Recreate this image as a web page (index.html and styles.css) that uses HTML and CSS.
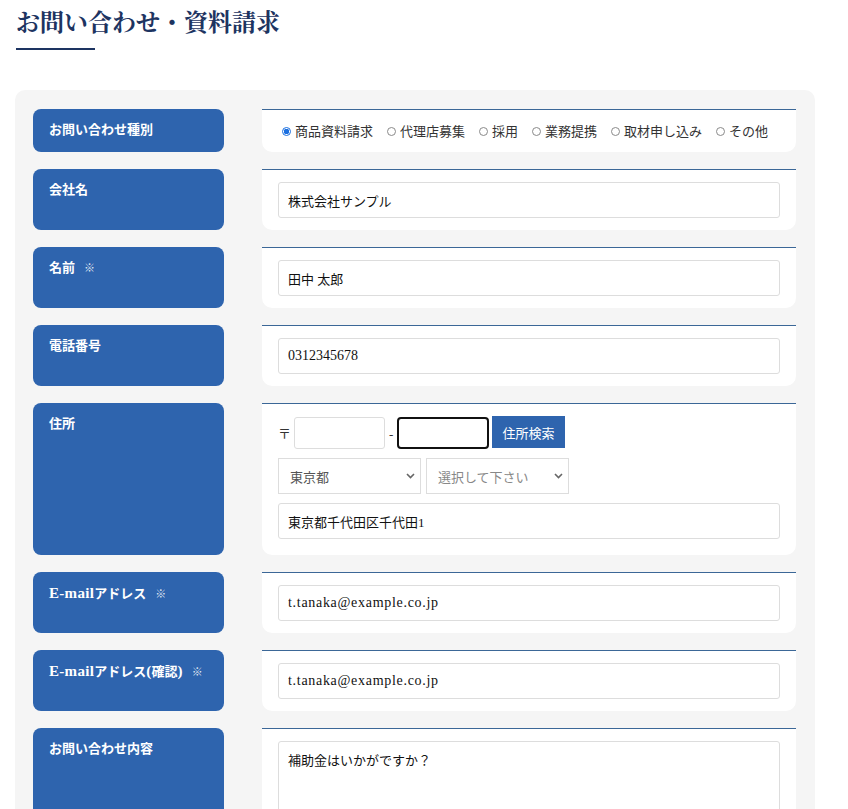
FILE: index.html
```html
<!DOCTYPE html>
<html lang="ja">
<head>
<meta charset="utf-8">
<title>お問い合わせ・資料請求</title>
<link rel="stylesheet" href="styles.css">
</head>
<body>
<div class="page">
  <h1 class="title">お問い合わせ・資料請求</h1>
  <div class="title-line"></div>

  <form class="form-box">
    <div class="label">お問い合わせ種別</div>
    <div class="panel panel-radio">
      <label class="radio"><input type="radio" name="kind" checked><span>商品資料請求</span></label>
      <label class="radio"><input type="radio" name="kind"><span>代理店募集</span></label>
      <label class="radio"><input type="radio" name="kind"><span>採用</span></label>
      <label class="radio"><input type="radio" name="kind"><span>業務提携</span></label>
      <label class="radio"><input type="radio" name="kind"><span>取材申し込み</span></label>
      <label class="radio"><input type="radio" name="kind"><span>その他</span></label>
    </div>

    <div class="label">会社名</div>
    <div class="panel"><input class="field" type="text" value="株式会社サンプル"></div>

    <div class="label">名前<span class="req">※</span></div>
    <div class="panel"><input class="field" type="text" value="田中 太郎"></div>

    <div class="label">電話番号</div>
    <div class="panel"><input class="field field-latin" type="text" value="0312345678"></div>

    <div class="label">住所</div>
    <div class="panel panel-address">
      <div class="zip-row">
        <span class="zip-mark">〒</span>
        <input class="zip zip1" type="text">
        <span class="zip-dash">-</span>
        <input class="zip zip2" type="text">
        <button class="zip-btn" type="button">住所検索</button>
      </div>
      <div class="select-row">
        <span class="select-wrap">
          <select class="sel sel-pref"><option>東京都</option></select>
          <svg class="chev" width="9" height="6" viewBox="0 0 9 6"><path d="M1 1 L4.5 4.5 L8 1" fill="none" stroke="#666" stroke-width="1.6"/></svg>
        </span>
        <span class="select-wrap">
          <select class="sel sel-city"><option>選択して下さい</option></select>
          <svg class="chev" width="9" height="6" viewBox="0 0 9 6"><path d="M1 1 L4.5 4.5 L8 1" fill="none" stroke="#666" stroke-width="1.6"/></svg>
        </span>
      </div>
      <input class="field" type="text" value="東京都千代田区千代田1">
    </div>

    <div class="label"><span class="lat">E-mail</span>アドレス<span class="req">※</span></div>
    <div class="panel"><input class="field field-latin field-mail" type="text" value="t.tanaka@example.co.jp"></div>

    <div class="label"><span class="lat">E-mail</span>アドレス<span class="lat">(</span>確認<span class="lat">)</span><span class="req">※</span></div>
    <div class="panel"><input class="field field-latin field-mail" type="text" value="t.tanaka@example.co.jp"></div>

    <div class="label label-tall">お問い合わせ内容</div>
    <div class="panel"><textarea class="area">補助金はいかがですか？</textarea></div>
  </form>
</div>
</body>
</html>
```

FILE: styles.css
```css
* { box-sizing: border-box; }

html, body {
  margin: 0;
  padding: 0;
  background: #ffffff;
}

body {
  font-family: "Liberation Serif", "Noto Sans CJK JP", serif;
  color: #222;
}

.page {
  padding: 0 15px 40px;
}

.title {
  margin: 0;
  padding: 5px 0 0 1px;
  font-family: "Noto Serif CJK JP", "Liberation Serif", "Noto Sans CJK JP", serif;
  font-size: 24px;
  line-height: 32px;
  font-weight: 700;
  color: #1d3461;
  letter-spacing: 0;
}

.title-line {
  width: 79px;
  height: 2px;
  margin: 11px 0 0 1px;
  background: #1d3461;
}

.form-box {
  margin-top: 40px;
  width: 800px;
  padding: 19px 19px 19px 18px;
  background: #f5f5f5;
  border-radius: 10px;
  display: grid;
  grid-template-columns: 191px 534px;
  column-gap: 38px;
  row-gap: 17px;
}

.label {
  background: #2e64ae;
  color: #ffffff;
  border-radius: 8px;
  padding: 11px 16px;
  font-family: "Liberation Serif", "Noto Sans CJK JP", serif;
  font-size: 13px;
  line-height: 20px;
  font-weight: 700;
}

.lat {
  font-size: 15px;
  letter-spacing: 0.3px;
}

.label-tall {
  min-height: 160px;
}

.req {
  font-size: 11px;
  font-weight: 400;
  color: rgba(255, 255, 255, 0.85);
  margin-left: 9px;
}

.panel {
  background: #ffffff;
  border-top: 1px solid #3b6797;
  border-radius: 0 0 10px 10px;
  padding: 12px 16px 12px;
}

.panel-radio {
  display: flex;
  align-items: center;
  gap: 14px;
  padding: 11px 20px;
}

.radio {
  display: flex;
  align-items: center;
  font-family: "Noto Sans CJK JP", sans-serif;
  font-size: 13px;
  line-height: 20px;
  color: #333;
  white-space: nowrap;
}

.radio input {
  appearance: none;
  -webkit-appearance: none;
  width: 9px;
  height: 9px;
  margin: 0 4px 0 0;
  border: 1px solid #8a8a8a;
  border-radius: 50%;
  background: #fff;
}

.radio input:checked {
  border-color: #1a6fe0;
  background: radial-gradient(circle, #1a6fe0 0 2.6px, #ffffff 3px);
}

.field {
  display: block;
  width: 100%;
  height: 36px;
  padding: 0 9px;
  border: 1px solid #dddddd;
  border-radius: 3px;
  background: #fff;
  font-family: "Liberation Serif", "Noto Sans CJK JP", serif;
  font-size: 13px;
  color: #111;
  outline: none;
}

.field-latin {
  font-size: 14px;
}

.field-mail {
  letter-spacing: 0.7px;
}

.panel-address {
  padding-bottom: 16px;
}

.zip-row {
  display: flex;
  align-items: center;
  height: 32px;
}

.zip-mark {
  font-family: "Noto Sans CJK JP", sans-serif;
  font-size: 13px;
  width: 13px;
  color: #333;
  margin-right: 3px;
}

.zip {
  height: 32px;
  border: 1px solid #dddddd;
  border-radius: 3px;
  background: #fff;
  outline: none;
  margin-top: 2px;
}

.zip1 { width: 91px; }

.zip2 {
  width: 92px;
  border: 2px solid #111;
  border-radius: 4px;
}

.zip-dash {
  font-size: 13px;
  color: #333;
  margin: 0 4px 0 4px;
  width: 4px;
  display: inline-block;
  padding-top: 6px;
}

.zip-btn {
  margin-left: 3px;
  width: 73px;
  height: 32px;
  border: none;
  padding: 0;
  background: #2e64ae;
  color: #fff;
  font-family: "Noto Sans CJK JP", sans-serif;
  font-size: 13px;
}

.select-row {
  display: flex;
  gap: 5px;
  margin: 10px 0 9px;
}

.select-wrap {
  position: relative;
  display: block;
}

.sel {
  appearance: none;
  -webkit-appearance: none;
  width: 143px;
  height: 36px;
  padding: 0 11px;
  border: 1px solid #dddddd;
  border-radius: 0;
  background: #fff;
  font-family: "Noto Sans CJK JP", sans-serif;
  font-size: 13px;
  outline: none;
}

.sel-pref { color: #555; }
.sel-city { color: #888; }

.chev {
  position: absolute;
  right: 6px;
  top: 15px;
  pointer-events: none;
}

.area {
  display: block;
  width: 100%;
  height: 150px;
  padding: 8px 9px;
  border: 1px solid #dddddd;
  border-radius: 3px;
  font-family: "Noto Sans CJK JP", sans-serif;
  font-size: 13px;
  color: #111;
  resize: none;
  outline: none;
}
```
